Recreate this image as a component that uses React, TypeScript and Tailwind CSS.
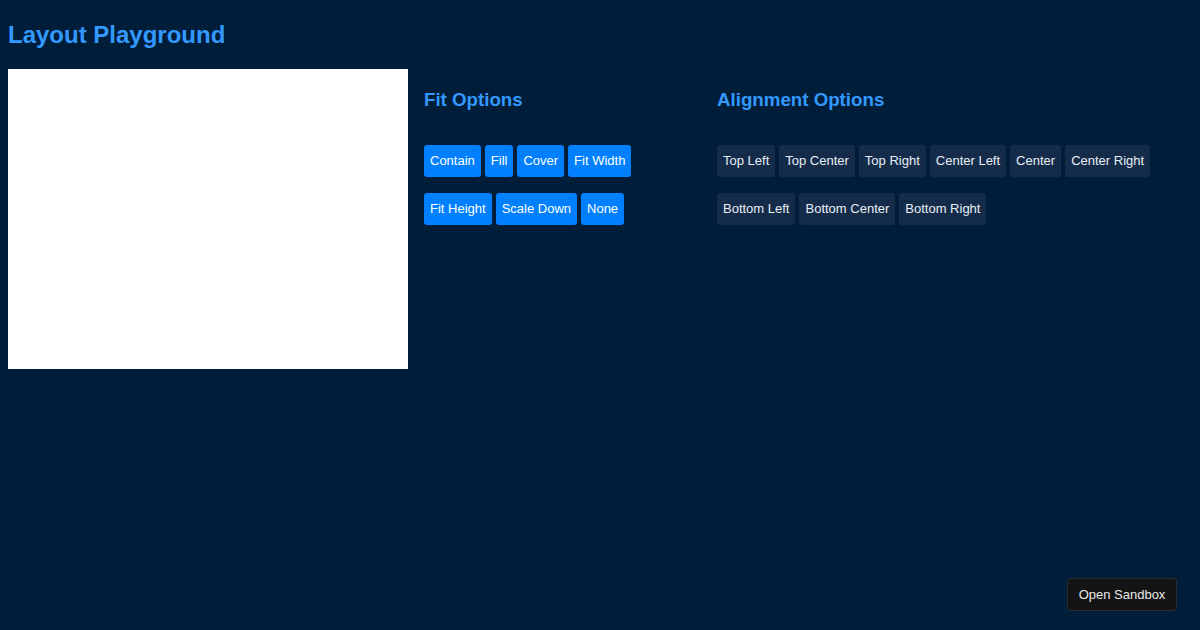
const fitOptions = ['Contain', 'Fill', 'Cover', 'Fit Width', 'Fit Height', 'Scale Down', 'None']
const alignOptions = [
  'Top Left',
  'Top Center',
  'Top Right',
  'Center Left',
  'Center',
  'Center Right',
  'Bottom Left',
  'Bottom Center',
  'Bottom Right',
]

function OptionButton({ label, active }: { label: string; active?: boolean }) {
  return (
    <button
      className={`h-8 px-1.5 pb-px rounded-[3px] text-[13px] leading-none ${
        active ? 'bg-[#0080ff] text-white' : 'bg-[#142c4a] text-[#e8eef5]'
      }`}
    >
      {label}
    </button>
  )
}

export default function App() {
  return (
    <div
      className="relative w-full h-[630px] bg-[#001d3a] px-2 overflow-hidden"
      style={{ fontFamily: '"Liberation Sans", Arial, sans-serif' }}
    >
      <h1 className="pt-[17px] h-[52px] text-2xl leading-9 font-bold text-[#3399ff]">Layout Playground</h1>

      <div className="mt-[17px] flex gap-4">
        <div className="w-[400px] h-[300px] bg-white shrink-0" />

        <div className="w-[277px] shrink-0">
          <h2 className="mt-[17px] text-[18.72px] leading-[28px] font-bold text-[#3399ff]">Fit Options</h2>
          <div className="mt-[31px] flex flex-wrap gap-x-1 gap-y-4">
            {fitOptions.map(opt => (
              <OptionButton key={opt} label={opt} active />
            ))}
          </div>
        </div>

        <div className="flex-1">
          <h2 className="mt-[17px] text-[18.72px] leading-[28px] font-bold text-[#3399ff]">Alignment Options</h2>
          <div className="mt-[31px] flex flex-wrap gap-x-1 gap-y-4">
            {alignOptions.map(opt => (
              <OptionButton key={opt} label={opt} />
            ))}
          </div>
        </div>
      </div>

      {/* floating sandbox link */}
      <button className="absolute right-[23px] bottom-[19px] w-[110px] h-[33px] rounded-[4px] bg-[#141414] border border-[#2c2c2c] text-[13px] text-[#e8e8e8]">
        Open Sandbox
      </button>
    </div>
  )
}
